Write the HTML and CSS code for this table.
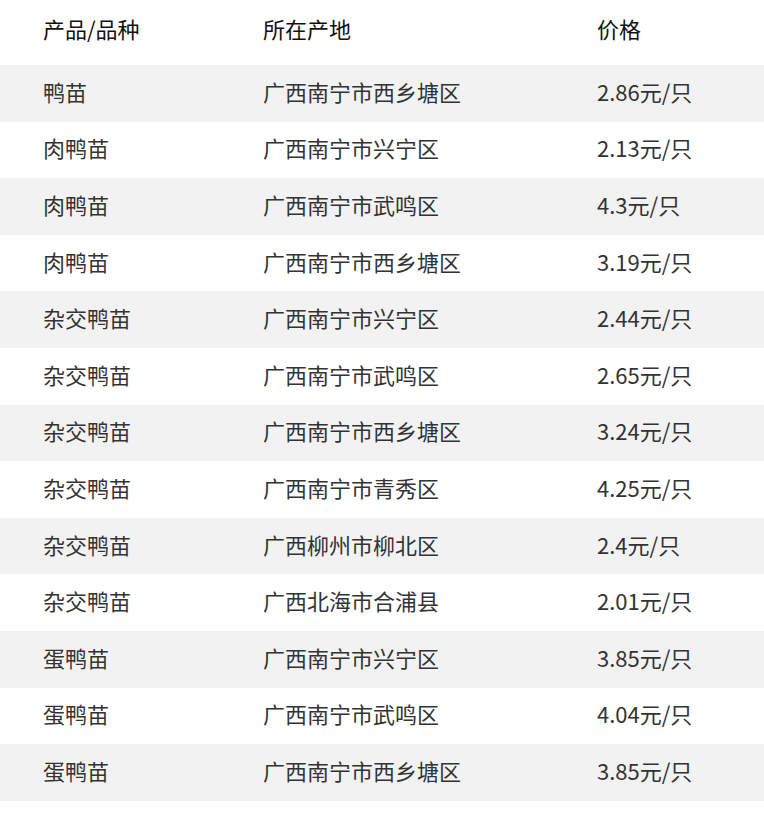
FILE: index.html
```html
<!DOCTYPE html>
<html lang="zh-CN">
<head>
<meta charset="utf-8">
<link rel="stylesheet" href="styles.css">
</head>
<body>
<div class="table">
  <div class="row head"><div>产品/品种</div><div>所在产地</div><div>价格</div></div>
  <div class="row odd"><div>鸭苗</div><div>广西南宁市西乡塘区</div><div>2.86元/只</div></div>
  <div class="row"><div>肉鸭苗</div><div>广西南宁市兴宁区</div><div>2.13元/只</div></div>
  <div class="row odd"><div>肉鸭苗</div><div>广西南宁市武鸣区</div><div>4.3元/只</div></div>
  <div class="row"><div>肉鸭苗</div><div>广西南宁市西乡塘区</div><div>3.19元/只</div></div>
  <div class="row odd"><div>杂交鸭苗</div><div>广西南宁市兴宁区</div><div>2.44元/只</div></div>
  <div class="row"><div>杂交鸭苗</div><div>广西南宁市武鸣区</div><div>2.65元/只</div></div>
  <div class="row odd"><div>杂交鸭苗</div><div>广西南宁市西乡塘区</div><div>3.24元/只</div></div>
  <div class="row"><div>杂交鸭苗</div><div>广西南宁市青秀区</div><div>4.25元/只</div></div>
  <div class="row odd"><div>杂交鸭苗</div><div>广西柳州市柳北区</div><div>2.4元/只</div></div>
  <div class="row"><div>杂交鸭苗</div><div>广西北海市合浦县</div><div>2.01元/只</div></div>
  <div class="row odd"><div>蛋鸭苗</div><div>广西南宁市兴宁区</div><div>3.85元/只</div></div>
  <div class="row"><div>蛋鸭苗</div><div>广西南宁市武鸣区</div><div>4.04元/只</div></div>
  <div class="row odd"><div>蛋鸭苗</div><div>广西南宁市西乡塘区</div><div>3.85元/只</div></div>
</div>
</body>
</html>
```

FILE: styles.css
```css
html, body {
  margin: 0;
  padding: 0;
  background: #fff;
}
body {
  font-family: "Noto Sans CJK SC", "Noto Sans", sans-serif;
  font-size: 22px;
  color: #333;
}
.table {
  display: flex;
  flex-direction: column;
  width: 764px;
}
.row {
  display: grid;
  grid-template-columns: 220px 334px 210px;
  height: 56.6px;
  align-items: center;
  line-height: 1;
  box-sizing: border-box;
  padding-bottom: 5px;
}
.row > div {
  padding-left: 43px;
  white-space: nowrap;
}
.row.head {
  height: 65px;
  color: #111;
  padding-bottom: 10px;
}
.row.odd {
  background: #f2f2f2;
}
```
